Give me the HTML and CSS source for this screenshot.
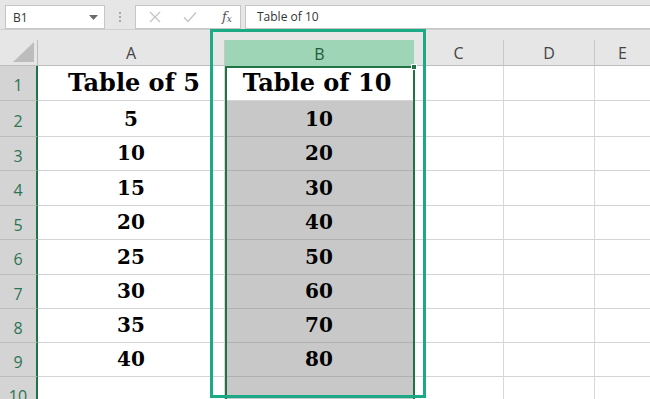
FILE: index.html
```html
<!DOCTYPE html>
<html>
<head>
<meta charset="utf-8">
<link rel="stylesheet" href="styles.css">
</head>
<body>
<div class="app">
  <div class="fbar">
    <div class="namebox"><span>B1</span><svg class="caret" width="9" height="5" viewBox="0 0 9 5"><path d="M0 0h9L4.5 5z" fill="#6b6b6b"/></svg></div>
    <div class="dots"><i></i><i></i><i></i></div>
    <div class="fbtns">
      <svg class="fx-ic" width="12" height="12" viewBox="0 0 12 12"><path d="M1 1l10 10M11 1L1 11" stroke="#c4c4c4" stroke-width="1.3"/></svg>
      <svg class="fx-ic" width="14" height="12" viewBox="0 0 14 12"><path d="M1 6.5l4 4L13 1.5" stroke="#c4c4c4" stroke-width="1.3" fill="none"/></svg>
      <span class="fx">f<sub>x</sub></span>
    </div>
    <div class="finput">Table of 10</div>
  </div>
  <div class="band"></div>
  <div class="sheet">
    <div class="ch corner"><svg width="22" height="20" viewBox="0 0 22 20"><path d="M21 0V20H0z" fill="#bdbdbd"/></svg></div>
    <div class="ch">A</div>
    <div class="ch sel">B</div>
    <div class="ch">C</div>
    <div class="ch">D</div>
    <div class="ch last">E</div>

    <div class="rh r35">1</div><div class="c head">Table of 5</div><div class="c head b1">Table of 10</div><div class="c"></div><div class="c"></div><div class="c last"></div>
    <div class="rh r36">2</div><div class="c num">5</div><div class="c num g">10</div><div class="c"></div><div class="c"></div><div class="c last"></div>
    <div class="rh r34">3</div><div class="c num">10</div><div class="c num g">20</div><div class="c"></div><div class="c"></div><div class="c last"></div>
    <div class="rh r35">4</div><div class="c num">15</div><div class="c num g">30</div><div class="c"></div><div class="c"></div><div class="c last"></div>
    <div class="rh r34">5</div><div class="c num">20</div><div class="c num g">40</div><div class="c"></div><div class="c"></div><div class="c last"></div>
    <div class="rh r35">6</div><div class="c num">25</div><div class="c num g">50</div><div class="c"></div><div class="c"></div><div class="c last"></div>
    <div class="rh r34">7</div><div class="c num">30</div><div class="c num g">60</div><div class="c"></div><div class="c"></div><div class="c last"></div>
    <div class="rh r34">8</div><div class="c num">35</div><div class="c num g">70</div><div class="c"></div><div class="c"></div><div class="c last"></div>
    <div class="rh r34">9</div><div class="c num">40</div><div class="c num g">80</div><div class="c"></div><div class="c"></div><div class="c last"></div>
    <div class="rh r34">10</div><div class="c"></div><div class="c g"></div><div class="c"></div><div class="c"></div><div class="c last"></div>
  </div>
  <div class="selbox"><span class="handle"></span></div>
  <div class="annot"></div>
</div>
</body>
</html>
```
FILE: styles.css
```css
* { box-sizing: border-box; margin: 0; padding: 0; }
html, body { width: 650px; height: 399px; overflow: hidden; background: #fff; }
.app { position: relative; width: 650px; height: 399px; overflow: hidden; font-family: "Open Sans", "Noto Sans", sans-serif; }

.fbar { height: 30px; background: #e6e6e6; display: flex; align-items: flex-start; padding-top: 5px; padding-left: 5px; border-bottom: 1px solid #d0d0d0; }
.namebox { width: 100px; height: 24px; background: #fff; border: 1px solid #c6c6c6; display: flex; align-items: center; justify-content: space-between; padding: 0 6px 0 7px; font-size: 12px; color: #333; }
.caret { margin-top: 1px; }
.dots { width: 30px; height: 24px; display: flex; flex-direction: column; align-items: center; justify-content: center; gap: 2px; }
.dots i { display: block; width: 2px; height: 2px; background: #a8a8a8; }
.fbtns { width: 106px; height: 24px; background: #fff; border: 1px solid #c6c6c6; display: flex; align-items: center; padding-left: 13px; gap: 22px; }
.fx { font-family: "DejaVu Serif", serif; font-style: italic; font-size: 13px; color: #555; margin-left: 3px; line-height: 1; }
.fx sub { font-size: 9px; vertical-align: -1px; }
.finput { flex: 1; height: 24px; margin-left: 4px; background: #fff; border: 1px solid #c6c6c6; border-right: none; padding-left: 11px; font-size: 12px; color: #333; line-height: 22px; }

.band { height: 10px; background: #e6e6e6; }

.sheet { display: grid; grid-template-columns: 38px 187px 189px 90px 91px 55px; grid-auto-rows: auto; }
.ch { height: 26px; background: #e6e6e6; border-right: 1px solid #c8c8c8; border-bottom: 1px solid #bdbdbd; display: flex; align-items: center; justify-content: center; font-size: 16px; color: #444; padding-top: 1px; }
.ch.corner { justify-content: flex-end; align-items: flex-end; padding: 0 2px 3px 0; border-right: 1px solid #bdbdbd; }
.ch.sel { background: #9fd5b7; color: #1e5c3a; border-right: none; border-bottom: none; }
.ch.last { border-right: none; }

.rh { background: #d4d4d4; color: #2d7452; font-size: 16px; display: flex; align-items: center; justify-content: center; border-bottom: 1px solid #bcbcbc; border-right: 2px solid #217346; padding-top: 4px; }
.r34 { height: 34px; } .r35 { height: 35px; } .r36 { height: 36px; }

.c { border-right: 1px solid #d8d8d8; border-bottom: 1px solid #d4d4d4; display: flex; align-items: flex-end; justify-content: center; font-family: "DejaVu Serif", serif; font-weight: bold; color: #000; }
.c.last { border-right: none; }
.c.head { font-size: 24px; padding-bottom: 3px; padding-left: 6px; }
.c.b1 { padding-left: 0; padding-right: 4px; }
.c.num { font-size: 20px; padding-bottom: 5px; }
.c.g { background: #c8c8c8; border-bottom-color: #b0b0b0; border-right-color: #c8c8c8; }

.selbox { position: absolute; left: 225px; top: 66px; width: 190px; height: 340px; border: 2px solid #217346; border-bottom: none; }
.handle { position: absolute; right: -4px; top: -4px; width: 6px; height: 6px; background: #217346; border: 1px solid #fff; }
.annot { position: absolute; left: 210px; top: 29px; width: 216px; height: 369px; border: 3px solid #1caa86; }
```
